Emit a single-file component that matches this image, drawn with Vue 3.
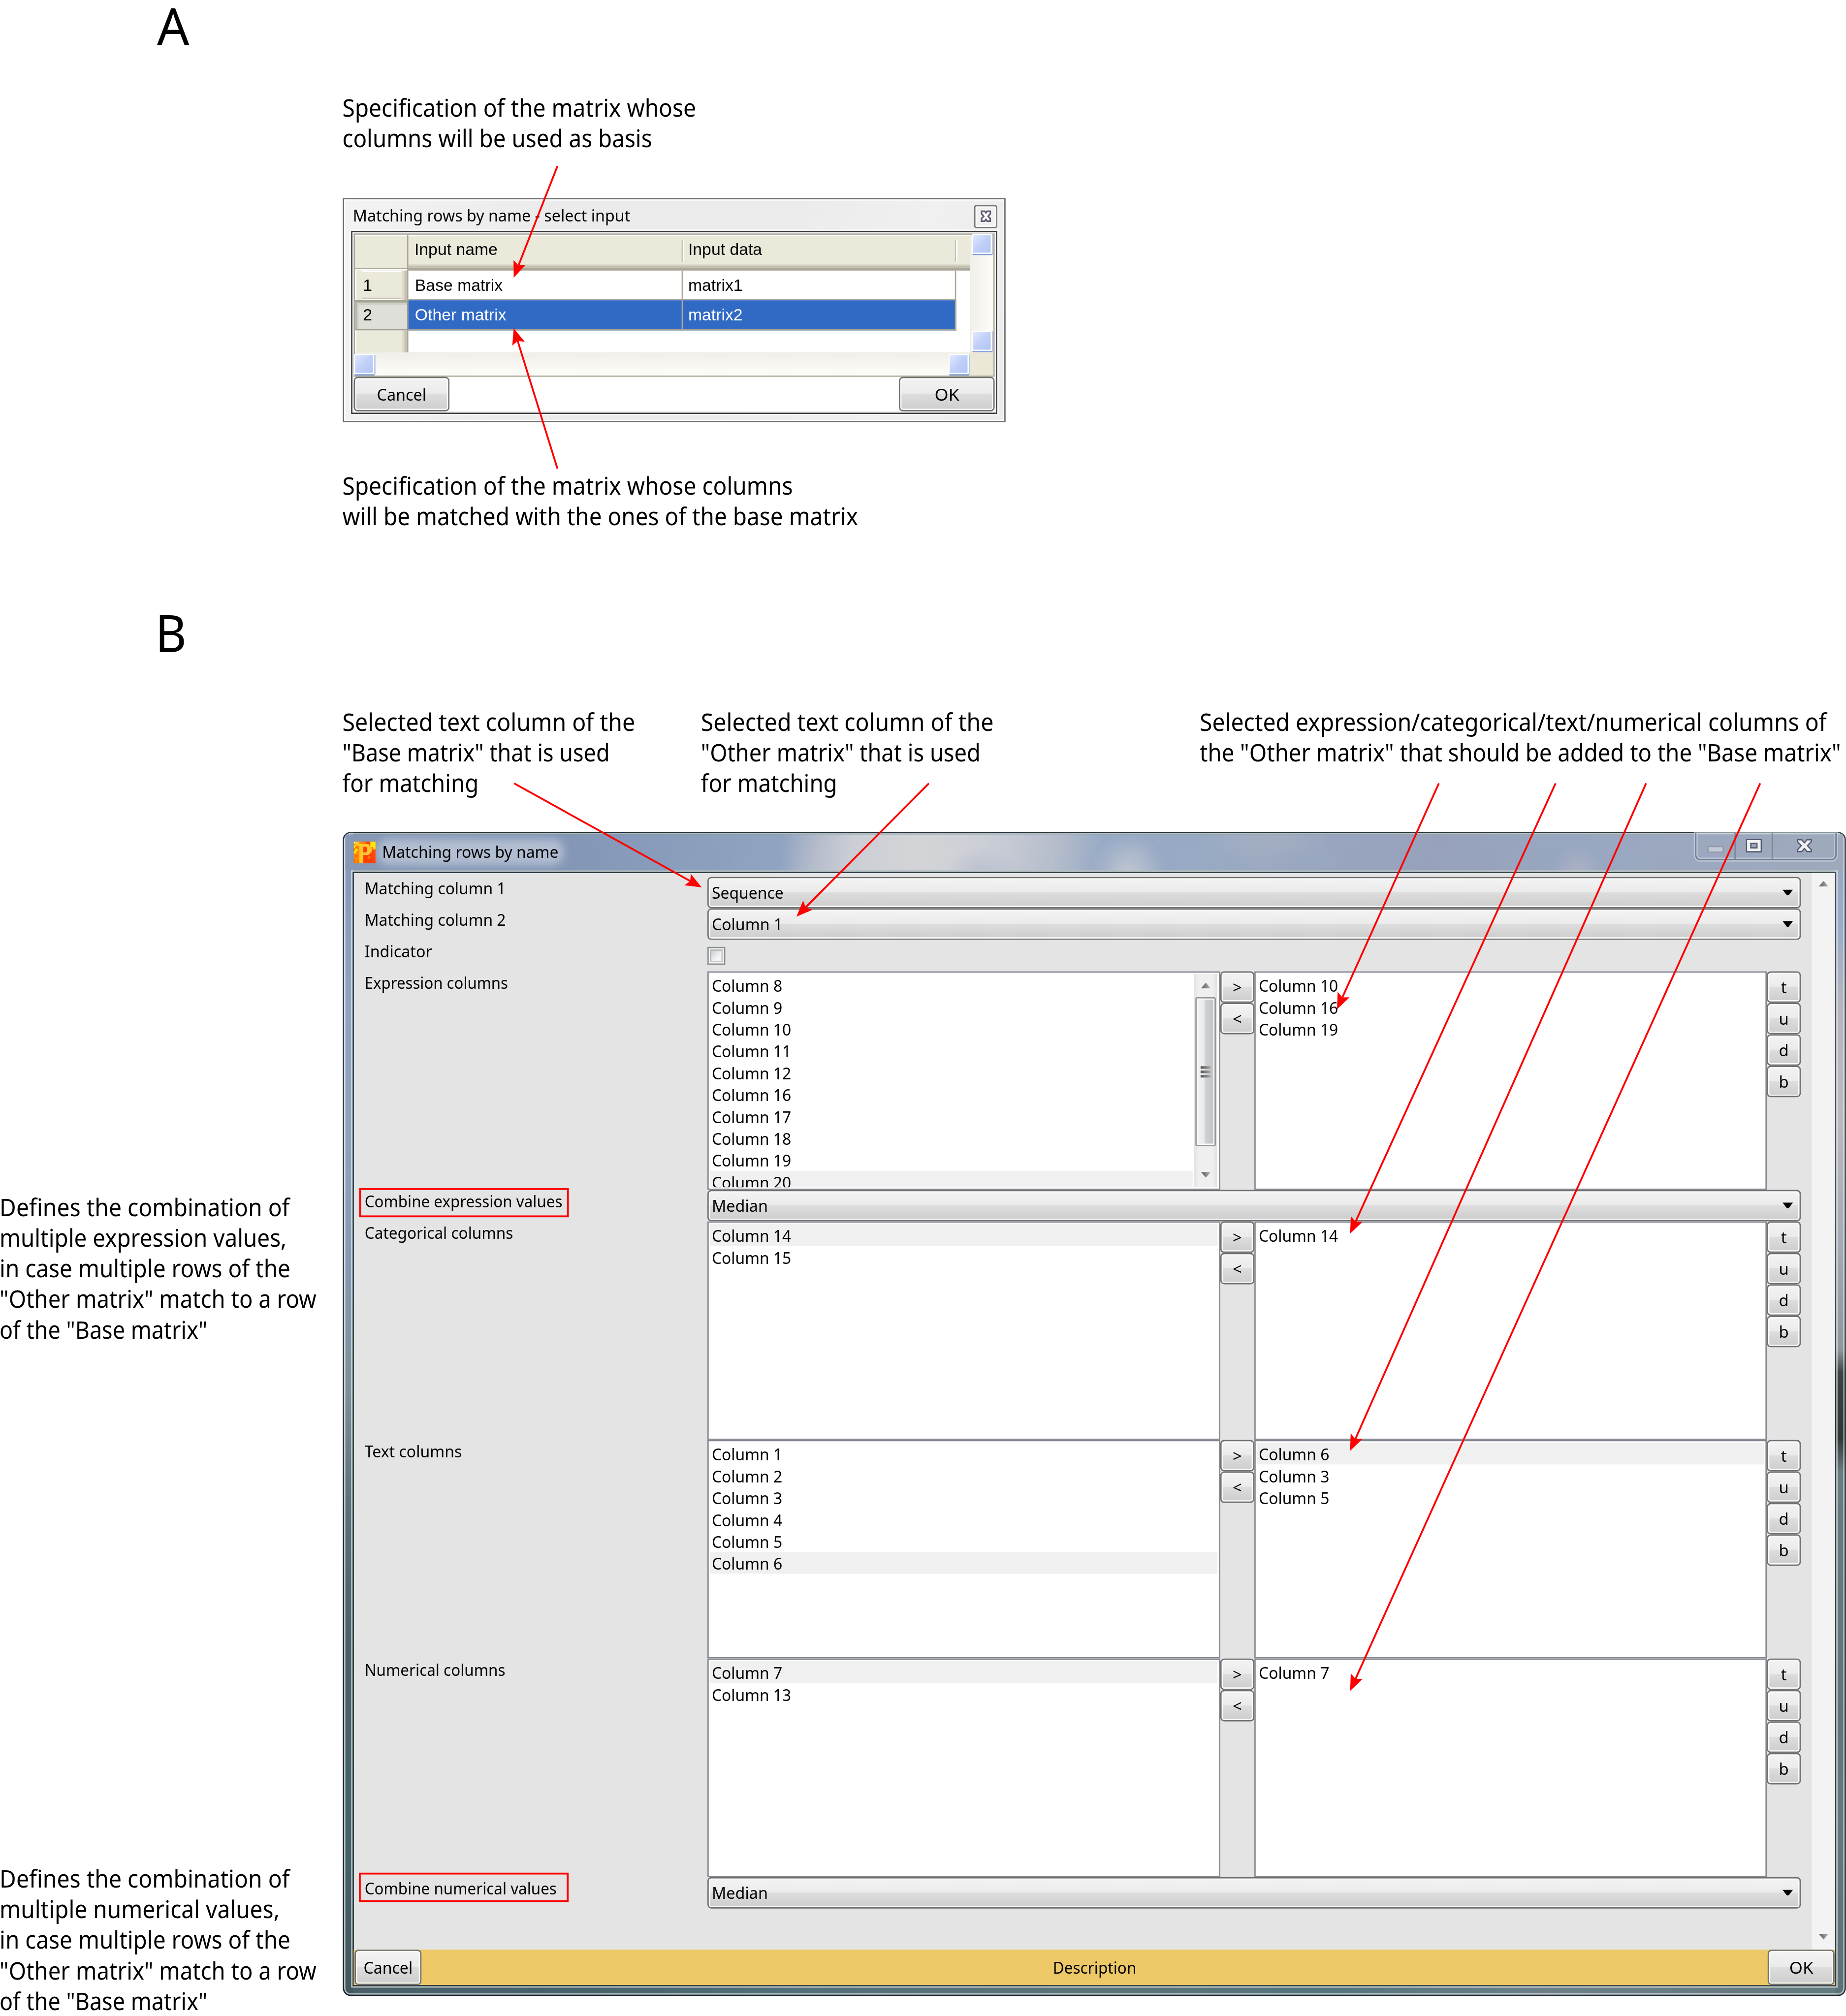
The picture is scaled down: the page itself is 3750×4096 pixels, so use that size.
<script setup>
// Squeezes a run of text horizontally so its advance equals the given width.
const vFit = {
  mounted(el, binding) {
    const natural = el.offsetWidth
    if (binding.value && natural) el.style.transform = `scaleX(${binding.value / natural})`
  },
}

const notes = [
  { x: 783, y: 210, lines: [['Specification of the matrix whose', 809], ['columns will be used as basis', 708]] },
  { x: 783, y: 1074, lines: [['Specification of the matrix whose columns', 1030], ['will be matched with the ones of the base matrix', 1180]] },
  { x: 783, y: 1615, lines: [['Selected text column of the', 670], ['"Base matrix" that is used', 612], ['for matching', 312]] },
  { x: 1603, y: 1615, lines: [['Selected text column of the', 670], ['"Other matrix" that is used', 640], ['for matching', 312]] },
  { x: 2744, y: 1615, lines: [['Selected expression/categorical/text/numerical columns of', 1434], ['the "Other matrix" that should be added to the "Base matrix"', 1466]] },
  { x: -1, y: 2725, lines: [['Defines the combination of', 664], ['multiple expression values,', 657], ['in case multiple rows of the', 665], ['"Other matrix" match to a row', 725], ['of the "Base matrix"', 475]] },
  { x: -1, y: 4261, lines: [['Defines the combination of', 664], ['multiple numerical values,', 641], ['in case multiple rows of the', 665], ['"Other matrix" match to a row', 725], ['of the "Base matrix"', 475]] },
]

// [tail x, tail y, tip x, tip y]
const arrows = [
  [1275, 380, 1175, 635],
  [1275, 1072, 1175, 751],
  [1176, 1792, 1605, 2030],
  [2124.6, 1792, 1821.5, 2097],
  [3291, 1792, 3058, 2309],
  [3558, 1792, 3088, 2822],
  [3765, 1792, 3088, 3319],
  [4026, 1792, 3088, 3868],
].map(([x1, y1, x2, y2]) => {
  const len = Math.hypot(x2 - x1, y2 - y1)
  const ux = (x2 - x1) / len
  const uy = (y2 - y1) / len
  const at = (back, side) => `${x2 - ux * back - uy * side},${y2 - uy * back + ux * side}`
  return { x1, y1, x2: x2 - ux * 30, y2: y2 - uy * 30, head: [at(0, 0), at(37, 15), at(30, 0), at(37, -15)].join(' ') }
})

const cols = (...n) => n.map((v) => ({ text: `Column ${v}`, width: v > 9 ? 182 : 161 }))

const rows = [
  { label: 'Matching column 1', width: 323, kind: 'choice', value: 'Sequence', vw: 164 },
  { label: 'Matching column 2', width: 323, kind: 'choice', value: 'Column 1', vw: 162 },
  { label: 'Indicator', width: 154, kind: 'check' },
  { label: 'Expression columns', width: 328, kind: 'lists', left: cols(8, 9, 10, 11, 12, 16, 17, 18, 19, 20), leftOn: 9, right: cols(10, 16, 19), rightOn: -1, scroll: true },
  { label: 'Combine expression values', width: 452, kind: 'choice', value: 'Median', vw: 128 },
  { label: 'Categorical columns', width: 340, kind: 'lists', left: cols(14, 15), leftOn: 0, right: cols(14), rightOn: -1 },
  { label: 'Text columns', width: 222, kind: 'lists', left: cols(1, 2, 3, 4, 5, 6), leftOn: 5, right: cols(6, 3, 5), rightOn: 0 },
  { label: 'Numerical columns', width: 322, kind: 'lists', left: cols(7, 13), leftOn: 0, right: cols(7), rightOn: -1 },
  { label: 'Combine numerical values', width: 439, kind: 'choice', value: 'Median', vw: 128 },
]
</script>

<template>
  <div class="page">
    <div class="canvas">
      <div class="letter letter-a"><span v-fit="74" class="fit">A</span></div>
      <div class="letter letter-b"><span v-fit="72" class="fit">B</span></div>

      <div v-for="(n, i) in notes" :key="i" class="note" :style="{ left: n.x + 'px', top: n.y + 'px' }">
        <div v-for="l in n.lines" :key="l[0]"><span v-fit="l[1]" class="fit">{{ l[0] }}</span></div>
      </div>

      <section class="dlg">
        <header class="dlg-title">
          <span v-fit="635" class="fit">Matching rows by name - select input</span>
          <span class="dlg-close">
            <svg width="24" height="27" viewBox="0 0 24 27">
              <path d="M2 2h7l3 4 3-4h7v6l-5 5.500 5 5.500v6h-7l-3-4-3 4H2v-6l5-5.500L2 8z" fill="#fff" stroke="#5a5a70" stroke-width="3.500" />
            </svg>
          </span>
        </header>
        <div class="dlg-body">
          <div class="grid">
            <div class="table">
              <div class="thead">
                <div class="corner"></div>
                <div class="th">Input name</div>
                <div class="th th2">Input data</div>
              </div>
              <div class="tr">
                <div class="rh">1</div>
                <div class="td">Base matrix</div>
                <div class="td td2">matrix1</div>
              </div>
              <div class="tr sel">
                <div class="rh">2</div>
                <div class="td">Other matrix</div>
                <div class="td td2">matrix2</div>
              </div>
              <div class="tr rest"><div class="rh"></div></div>
            </div>
            <div class="vs"><i class="knob"></i><i class="knob"></i></div>
            <div class="hs"><i class="knob"></i><i class="knob"></i></div>
            <div class="sizer"></div>
          </div>
          <div class="dlg-actions">
            <button class="btn"><span v-fit="113" class="fit mid">Cancel</span></button>
            <button class="btn"><span v-fit="57" class="fit mid">OK</span></button>
          </div>
        </div>
      </section>

      <section class="win">
        <header class="win-title">
          <div class="sky"></div>
          <svg class="app" width="50" height="50" viewBox="0 0 50 50">
            <rect width="50" height="50" fill="#ff3d00" />
            <path d="M0 0h22v50H0z" fill="#ff8a00" />
            <path d="M0 9h6v6H0zM3 16h6v6H3zM0 22h6v5H0zM38 0h12v16h-6v-3h-6z" fill="#ffe800" />
            <path d="M0 3h3V0h10v6h9v3H3V6H0z" fill="#ffcf20" />
            <path d="M0 0h3v3H0z" fill="#fff7c8" />
            <path d="M3 12h6v4H3zM0 40h3v10H0zM9 44h4v6H9zM3 31h6v4H3z" fill="#ff6500" />
            <path d="M22 0h6v6h-6zM32 34h6v7h-6z" fill="#ff7b00" />
            <path d="M41 16h9v3h-9z" fill="#ff9900" />
            <path d="M13 6h22v3h4v4h2v12h-3v4h-4v2H22v19h-9zM22 12v13h6l3-3v-7l-3-3z" fill="#ffc62f" fill-rule="evenodd" />
          </svg>
          <span class="cap"><span v-fit="403" class="fit">Matching rows by name</span></span>
          <div class="ctl">
            <i class="c1">
              <svg width="38" height="16" viewBox="0 0 38 16"><rect x="1.500" y="1.500" width="35" height="13" rx="1" fill="#c3c9d6" stroke="#9198a8" stroke-width="3" /></svg>
            </i>
            <i class="c2">
              <svg width="37" height="31" viewBox="0 0 37 31"><rect x="1.500" y="1.500" width="34" height="28" rx="1" fill="#f1f1f2" stroke="#545a70" stroke-width="3" /><rect x="11.500" y="10.500" width="14" height="10" fill="#9ba6bb" stroke="#545a70" stroke-width="3" /></svg>
            </i>
            <i class="c3">
              <svg width="36" height="31" viewBox="0 0 36 31"><path d="M2 2h10l6 7 6-7h10v4l-9 9.500 9 9.500v4H24l-6-7-6 7H2v-4l9-9.500L2 6z" fill="#f1f1f2" stroke="#545a70" stroke-width="3" stroke-linejoin="round" /></svg>
            </i>
          </div>
        </header>

        <div class="win-body">
          <div class="form-wrap">
            <div class="form">
              <div v-for="(r, i) in rows" :key="i" class="row" :class="r.kind">
                <div class="label"><span v-fit="r.width" class="fit">{{ r.label }}</span></div>
                <div v-if="r.kind === 'choice'" class="combo">
                  <span v-fit="r.vw" class="fit">{{ r.value }}</span>
                  <svg width="24" height="14" viewBox="0 0 24 14"><path d="M0 0h24L14 13h-4z" /></svg>
                </div>
                <div v-else-if="r.kind === 'check'" class="box"><i></i></div>
                <div v-else class="pair">
                  <div class="list">
                    <div class="items">
                      <div v-for="(c, k) in r.left" :key="k" class="item" :class="{ on: k === r.leftOn }"><span v-fit="c.width" class="fit">{{ c.text }}</span></div>
                    </div>
                    <div v-if="r.scroll" class="bar">
                      <svg width="22" height="13" viewBox="0 0 22 13"><path d="M11 0l11 13H0z" fill="url(#tri)" /></svg>
                      <div class="thumb"><i></i><i></i><i></i></div>
                      <svg width="22" height="13" viewBox="0 0 22 13"><path d="M0 0h22L11 13z" fill="url(#tri)" /></svg>
                    </div>
                  </div>
                  <div class="stack">
                    <button class="btn">&gt;</button>
                    <button class="btn">&lt;</button>
                  </div>
                  <div class="list">
                    <div class="items">
                      <div v-for="(c, k) in r.right" :key="k" class="item" :class="{ on: k === r.rightOn }"><span v-fit="c.width" class="fit">{{ c.text }}</span></div>
                    </div>
                  </div>
                  <div class="stack">
                    <button v-for="b in ['t', 'u', 'd', 'b']" :key="b" class="btn">{{ b }}</button>
                  </div>
                </div>
              </div>
            </div>
            <div class="outer-bar">
              <svg width="22" height="13" viewBox="0 0 22 13"><path d="M11 0l11 13H0z" fill="url(#tri)" /></svg>
              <svg width="22" height="13" viewBox="0 0 22 13"><path d="M0 0h22L11 13z" fill="url(#tri)" /></svg>
            </div>
          </div>
          <footer class="foot">
            <button class="btn"><span v-fit="112" class="fit mid">Cancel</span></button>
            <span class="desc"><span v-fit="191" class="fit mid">Description</span></span>
            <button class="btn"><span v-fit="55" class="fit mid">OK</span></button>
          </footer>
        </div>
      </section>

      <svg class="marks" width="4222" height="4612" viewBox="0 0 4222 4612">
        <defs>
          <linearGradient id="tri" x1="0" x2="1" y1="0" y2="0"><stop offset="0" stop-color="#555" /><stop offset="1" stop-color="#b5b5b5" /></linearGradient>
        </defs>
        <g stroke="#f00" stroke-width="4.200" fill="none">
          <rect x="823.500" y="2720" width="475.500" height="62.500" />
          <rect x="823" y="4286" width="475.500" height="63" />
          <line v-for="(a, i) in arrows" :key="i" :x1="a.x1" :y1="a.y1" :x2="a.x2" :y2="a.y2" />
        </g>
        <polygon v-for="(a, i) in arrows" :key="i" :points="a.head" fill="#f00" />
      </svg>
    </div>
  </div>
</template>

<style>
body {
  margin: 0;
  background: #fff;
}
</style>

<style scoped>
.page {
  width: 3750px;
  height: 4096px;
  overflow: hidden;
  background: #fff;
}
.canvas {
  position: relative;
  width: 4222px;
  height: 4612px;
  transform: scale(0.88816);
  transform-origin: 0 0;
  font: 37px/50px 'Noto Sans', 'Open Sans', sans-serif;
  color: #000;
}
.canvas * {
  box-sizing: border-box;
}
.fit {
  display: inline-block;
  white-space: pre;
  transform-origin: 0 50%;
}
.fit.mid {
  transform-origin: 50% 50%;
}
.letter {
  position: absolute;
  font-size: 118px;
  line-height: 118px;
}
.letter-a {
  left: 359px;
  top: 0;
}
.letter-b {
  left: 355px;
  top: 1388px;
}
.note {
  position: absolute;
  font-size: 56px;
  line-height: 70px;
  white-space: nowrap;
}
.marks {
  position: absolute;
  left: 0;
  top: 0;
}
.btn {
  display: flex;
  align-items: center;
  justify-content: center;
  padding: 0;
  font: inherit;
  color: #000;
  border: 3px solid #707070;
  border-radius: 9px;
  background: linear-gradient(#f3f3f3, #ebebeb 48%, #dddddd 50%, #cdcdcd);
  box-shadow: inset 0 0 0 3px #fafafa;
}

/* input selection dialog */
.dlg {
  position: absolute;
  left: 784px;
  top: 453px;
  width: 1516px;
  height: 513px;
  border: 3px solid #6d6d6d;
  background: linear-gradient(110deg, #f3f3f3, #ebebeb 30%, #ebebeb 60%, #f0f0f0 80%, #ebebeb);
  box-shadow: inset 0 0 0 3px #fafafa;
  padding: 0 16px;
}
.dlg-title {
  height: 72px;
  display: flex;
  justify-content: space-between;
  align-items: center;
  padding-left: 4px;
}
.dlg-title .fit {
  margin-top: 1px;
}
.dlg-close {
  width: 53px;
  height: 53px;
  margin-top: 7px;
  border: 3px solid #777;
  border-radius: 5px;
  background: #f0f0f0;
  box-shadow: inset 0 0 0 3px #fafafa;
  display: flex;
  align-items: center;
  justify-content: center;
}
.dlg-close svg {
  margin-bottom: 2px;
}
.dlg-body {
  width: 1478px;
  height: 419px;
  border: 3px solid #3a3a3c;
  box-shadow: 0 0 0 3px #f8f8f8, inset 0 0 0 3px #f0f0f4;
  background: #fff;
  padding: 3px;
}
.grid {
  height: 328px;
  border: 3px solid #aca899;
  background: #fff;
  display: grid;
  grid-template: 269px 53px / 1407px 53px;
  font: 38px/50px 'Liberation Sans', Arial, sans-serif;
}
.thead {
  height: 82px;
  display: flex;
  line-height: 67px;
  background: linear-gradient(#fff 4px, #ebe9da 4px 66px, #dfdccb 66px 69px, #d2cebd 69px 72px, #c6c2b1 72px 75px, #aca899 75px);
}
.corner {
  width: 122px;
  border-right: 3px solid #aca899;
  background: linear-gradient(#fff 4px, #ebe9da 4px 75px, #aca899 75px 79px, #fff 79px);
}
.th {
  width: 628px;
  padding-left: 14px;
  background: linear-gradient(90deg, #c6c2b1 50%, #fff 50%) 100% 13px / 6px 50px no-repeat;
}
.th:nth-child(2) {
  width: 631px;
}
.th2 {
  width: 625px;
  padding-left: 9px;
}
.tr {
  display: flex;
  height: 68px;
  line-height: 67px;
}
.tr + .tr {
  height: 69px;
}
.rh {
  width: 122px;
  padding-left: 18px;
  border-right: 3px solid #aca899;
  background: linear-gradient(#fff, #fff) 16px 0 / 90px 3px no-repeat, linear-gradient(#c6c2b1 50%, #fff 50%) 16px 100% / 90px 6px no-repeat, linear-gradient(90deg, #fff 3px, #ebe9da 3px 107px, #dfdccb 107px 111px, #d2cebd 111px 115px, #c6c2b1 115px);
}
.td {
  width: 628px;
  padding-left: 15px;
  border-right: 3px solid #aca899;
  border-bottom: 3px solid #aca899;
}
.td2 {
  width: 625px;
  padding-left: 12px;
}
.sel .td {
  background: #316ac5;
  color: #fff;
}
.sel .rh {
  border-right-color: #9d9c8c;
  border-bottom: 3px solid #9d9c8c;
  background: #dedfd8;
  box-shadow: inset 0 3px #9d9c8c, inset 4px 6px #b7b8ac, inset 8px 10px #cccdc3;
}
.tr.rest {
  height: 50px;
}
.rest .rh {
  background: linear-gradient(90deg, #fff 3px, #ebe9da 3px 107px, #dfdccb 107px 111px, #d2cebd 111px 115px, #c6c2b1 115px);
}
.vs {
  display: flex;
  flex-direction: column;
  justify-content: space-between;
  padding-left: 3px;
  border-left: 3px solid #eeede5;
  background: linear-gradient(90deg, #f1efea, #fdfdfa);
}
.vs .knob:first-child {
  margin-top: -3px;
}
.vs .knob {
  margin-left: -3px;
}
.hs {
  display: flex;
  justify-content: space-between;
  border-top: 3px solid #eeede5;
  background: linear-gradient(#f1efea, #fdfdfa);
}
.hs .knob:first-child {
  margin-left: -3px;
}
.knob {
  width: 50px;
  height: 50px;
  border: 3px solid #fff;
  border-bottom-color: #84a1d6;
  border-right-color: #b7c9e6;
  border-radius: 5px;
  background: linear-gradient(135deg, #e2eaff, #c1d0f8 45%, #aec3f4);
  box-shadow: inset -3px -3px #fff;
}
.sizer {
  background: #ebe8d7;
}
.dlg-actions {
  display: flex;
  justify-content: space-between;
}
.dlg-actions .btn {
  width: 219px;
  height: 79px;
}

/* matching window */
.win {
  position: absolute;
  left: 784px;
  top: 1903px;
  width: 3438px;
  height: 2663px;
  border: 3px solid rgba(8, 12, 16, 0.68);
  border-radius: 18px;
  padding: 0 19px;
  background:
    linear-gradient(#8597b5, #8fa4bf 15%, #8ba0b9 30%, #8399af 38%, #7d8f98 48%, #5b7078 58%, #4a6068 70%, #46626a 85%, #41585e) 0 0 / 24px 100% no-repeat border-box,
    linear-gradient(#9ba6bc, #9aabc8 8%, #b3b6c0 15%, #b9bbc0 24%, #a5abb4 35%, #8d979c 44.500%, #3a4341 46.500%, #2d3735 52%, #6b7c80 55%, #5e757c 75%, #64797f 85%, #5b7177) 100% 0 / 24px 100% no-repeat border-box,
    linear-gradient(90deg, #4a6068, #456268 15%, #527079 30%, #5c7478 50%, #54757c 65%, #6c8088 80%, #62797e) border-box;
  box-shadow: inset 0 0 0 3px rgba(255, 255, 255, 0.6);
}
.win-title {
  position: relative;
  height: 88px;
  display: flex;
  align-items: flex-start;
  margin-right: -1px;
  padding-left: 3px;
}
.sky {
  position: absolute;
  left: -16px;
  right: -15px;
  top: 3px;
  bottom: 3px;
  background:
    radial-gradient(ellipse 90px 110px at 1790px 100px, rgba(200, 203, 211, 0.9), transparent),
    radial-gradient(ellipse 60px 70px at 2820px 95px, rgba(180, 180, 196, 0.8), transparent),
    radial-gradient(ellipse 140px 80px at 2110px 0, rgba(170, 178, 194, 0.7), transparent),
    radial-gradient(ellipse 90px 60px at 1460px 90px, rgba(184, 188, 204, 0.8), transparent),
    linear-gradient(98deg, transparent 990px, rgba(184, 190, 204, 0.9) 1070px, #cbced5 1150px, #d3d4d6 1290px, #cdd0d6 1420px, #c6cad4 1500px, rgba(186, 192, 204, 0.9) 1610px, transparent 1730px),
    linear-gradient(90deg, #8698b6, #8396b6 500px, #90a3c0 980px, #94a8c5 1750px, #9aaac3 2000px, #97a1bb 2500px, #98a7c1 2800px, #9fa9bc);
}
.app {
  position: relative;
  margin-top: 19px;
}
.cap {
  position: relative;
  margin: 17px 0 0 15px;
}
.cap::before {
  content: '';
  position: absolute;
  left: -10px;
  top: -4px;
  width: 425px;
  height: 60px;
  border-radius: 24px;
  background: rgba(255, 255, 255, 0.38);
  filter: blur(10px);
}
.cap .fit {
  position: relative;
}
.ctl {
  position: absolute;
  right: 0;
  top: 0;
  width: 324px;
  height: 62px;
  border: 3px solid #6f788b;
  border-top: 0;
  border-radius: 0 0 12px 12px;
  display: flex;
  box-shadow: 0 0 0 3px rgba(220, 228, 240, 0.55), inset 0 0 0 3px rgba(220, 228, 240, 0.45);
}
.ctl i {
  display: flex;
  justify-content: center;
  align-items: flex-start;
  padding-top: 13px;
}
.c1 {
  width: 90px;
  border-right: 3px solid #7f889b;
}
.ctl .c1 {
  padding-top: 29px;
}
.c2 {
  width: 85px;
  border-right: 3px solid #7f889b;
}
.c3 {
  flex: 1;
}
.win-body {
  position: relative;
  width: 3394px;
  height: 2550px;
  border: 3px solid rgba(8, 12, 16, 0.55);
  background: #e4e4e4 padding-box;
  box-shadow: 0 0 0 3px rgba(255, 255, 255, 0.6);
}
.form-wrap {
  height: 2463px;
  display: flex;
}
.form {
  width: 3335px;
  padding-top: 9px;
}
.row {
  display: flex;
  height: 72px;
}
.row.lists {
  height: 500px;
}
.label {
  width: 809px;
  padding: 1px 0 0 25px;
}
.combo {
  width: 2501px;
  height: 72px;
  display: flex;
  justify-content: space-between;
  align-items: center;
  padding: 0 15px 0 7px;
  border: 3px solid #707070;
  border-radius: 9px;
  background: linear-gradient(#f3f3f3, #ebebeb 48%, #dddddd 50%, #cdcdcd);
  box-shadow: inset 0 0 0 3px #fafafa;
}
.box {
  width: 41px;
  height: 41px;
  margin-top: 16px;
  padding: 3px;
  border: 3px solid #8e8f8f;
  background: #f4f4f4;
}
.box i {
  display: block;
  height: 29px;
  border: 3px solid #c3c7cc;
  border-top-color: #aeb3b9;
  border-left-color: #aeb3b9;
  background: linear-gradient(135deg, #cbcfd5, #f6f6f6 70%);
}
.pair {
  display: flex;
}
.list {
  width: 1173px;
  height: 500px;
  display: flex;
  border: 3px solid #828790;
  background: #fff;
  padding: 3px;
}
.stack + .list {
  width: 1172px;
}
.items {
  flex: 1;
  overflow: hidden;
}
.item {
  height: 50px;
  padding: 2px 0 0 4px;
}
.item.on {
  background: #f0f0f0;
}
.stack {
  width: 78px;
}
.stack .btn {
  width: 78px;
  height: 72px;
}
.bar {
  width: 53px;
  margin: 0 1px 0 3px;
  padding: 20px 3px 22px;
  display: flex;
  flex-direction: column;
  align-items: center;
  justify-content: space-between;
  background: linear-gradient(90deg, #e2e2e2, #efefef 20%, #efefef 80%, #dfdfdf);
}
.thumb {
  width: 47px;
  height: 341px;
  margin-bottom: 39px;
  border: 3px solid #979797;
  border-radius: 4px;
  background: linear-gradient(90deg, #f5f5f5, #e6e7e8 45%, #cfd1d3 48%, #bfc3c6);
  box-shadow: inset 0 0 0 3px #f8f8f8;
  display: flex;
  flex-direction: column;
  align-items: center;
  justify-content: center;
  gap: 4px;
}
.thumb i {
  width: 23px;
  height: 6px;
  background: linear-gradient(90deg, #555, #aaa);
}
.outer-bar {
  width: 53px;
  padding: 18px 0 23px;
  display: flex;
  flex-direction: column;
  justify-content: space-between;
  align-items: center;
  background: #f3f3f3;
}
.foot {
  display: flex;
  height: 81px;
  background: #edc866;
  padding: 0 1px 0 2px;
}
.foot .btn {
  width: 153px;
}
.desc {
  flex: 1;
  display: flex;
  align-items: center;
  justify-content: center;
}
</style>
